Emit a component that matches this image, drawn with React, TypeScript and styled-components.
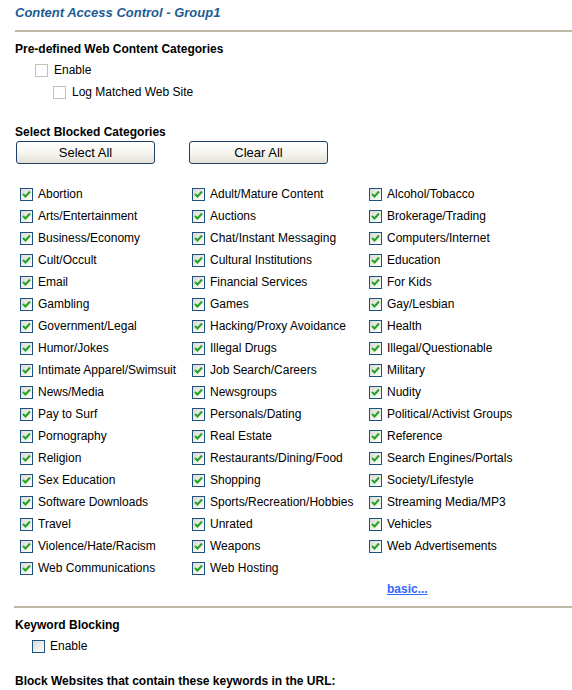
import React from "react";
import styled, { createGlobalStyle } from "styled-components";

const Global = createGlobalStyle`
  html, body { margin: 0; padding: 0; background: #ffffff; }
  body {
    font-family: "Liberation Sans", Arial, sans-serif;
    font-size: 12px;
    color: #000000;
  }
`;

const Page = styled.div`
  width: 572px;
  padding: 5px 0 0 0;
  box-sizing: border-box;
`;

const Title = styled.h1`
  margin: 0 0 0 15px;
  font-size: 13px;
  line-height: 16px;
  font-weight: bold;
  font-style: italic;
  color: #1b5d93;
`;

const Rule = styled.hr<{ $top: number; $left: number }>`
  margin: ${(p) => p.$top}px 0 0 ${(p) => p.$left}px;
  border: 0;
  height: 2px;
  background: #bdb9a6;
`;

const Heading = styled.div<{ $top: number }>`
  margin: ${(p) => p.$top}px 0 0 15px;
  font-weight: bold;
  line-height: 14px;
  height: 14px;
`;

const OptionRow = styled.label<{ $top: number; $indent: number; $gap?: number }>`
  display: flex;
  align-items: center;
  gap: ${(p) => p.$gap ?? 6}px;
  margin: ${(p) => p.$top}px 0 0 ${(p) => p.$indent}px;
  height: 14px;
  line-height: 14px;
`;

const Box = styled.span<{ $disabled?: boolean }>`
  display: inline-flex;
  align-items: center;
  justify-content: center;
  width: 11px;
  height: 11px;
  flex: none;
  border: 1px solid ${(p) => (p.$disabled ? "#c5c2b2" : "#1c5180")};
  background: ${(p) =>
    p.$disabled
      ? "#ffffff"
      : "linear-gradient(135deg, #dcdcd6 0%, #f4f4f0 70%, #ffffff 100%)"};
`;

const ButtonRow = styled.div`
  display: flex;
  gap: 34px;
  margin: 2px 0 0 16px;
`;

const Button = styled.button`
  width: 139px;
  height: 23px;
  padding: 0;
  border: 1px solid #1f3f6b;
  border-radius: 3px;
  background: linear-gradient(180deg, #ffffff 0%, #f5f4ef 55%, #e3e1d6 100%);
  font-family: "Liberation Sans", Arial, sans-serif;
  font-size: 13px;
  color: #000000;
`;

const Grid = styled.div`
  display: grid;
  grid-template-columns: 172px 177px 1fr;
  grid-auto-rows: 22px;
  margin: 19px 0 0 20px;
`;

const Cell = styled.label`
  display: flex;
  align-items: center;
  gap: 5px;
  white-space: nowrap;
`;

const LinkRow = styled.div`
  margin: 3px 0 0 387px;
  height: 14px;
  line-height: 14px;
`;

const MoreLink = styled.a`
  font-weight: bold;
  color: #3366ff;
  text-decoration: underline;
`;

const Check = () => (
  <svg width="9" height="8" viewBox="0 0 9 8">
    <path d="M1 4 L3.5 6.5 L8 1.5" fill="none" stroke="#23a323" strokeWidth="2" />
  </svg>
);

const categories = [
  ["Abortion", "Adult/Mature Content", "Alcohol/Tobacco"],
  ["Arts/Entertainment", "Auctions", "Brokerage/Trading"],
  ["Business/Economy", "Chat/Instant Messaging", "Computers/Internet"],
  ["Cult/Occult", "Cultural Institutions", "Education"],
  ["Email", "Financial Services", "For Kids"],
  ["Gambling", "Games", "Gay/Lesbian"],
  ["Government/Legal", "Hacking/Proxy Avoidance", "Health"],
  ["Humor/Jokes", "Illegal Drugs", "Illegal/Questionable"],
  ["Intimate Apparel/Swimsuit", "Job Search/Careers", "Military"],
  ["News/Media", "Newsgroups", "Nudity"],
  ["Pay to Surf", "Personals/Dating", "Political/Activist Groups"],
  ["Pornography", "Real Estate", "Reference"],
  ["Religion", "Restaurants/Dining/Food", "Search Engines/Portals"],
  ["Sex Education", "Shopping", "Society/Lifestyle"],
  ["Software Downloads", "Sports/Recreation/Hobbies", "Streaming Media/MP3"],
  ["Travel", "Unrated", "Vehicles"],
  ["Violence/Hate/Racism", "Weapons", "Web Advertisements"],
  ["Web Communications", "Web Hosting", ""],
];

export default function App() {
  return (
    <Page>
      <Global />
      <Title>Content Access Control - Group1</Title>
      <Rule $top={9} $left={15} />
      <Heading $top={10}>Pre-defined Web Content Categories</Heading>
      <OptionRow $top={7} $indent={35}>
        <Box $disabled />
        Enable
      </OptionRow>
      <OptionRow $top={8} $indent={53}>
        <Box $disabled />
        Log Matched Web Site
      </OptionRow>
      <Heading $top={26}>Select Blocked Categories</Heading>
      <ButtonRow>
        <Button>Select All</Button>
        <Button>Clear All</Button>
      </ButtonRow>
      <Grid>
        {categories.flat().map((name, i) =>
          name ? (
            <Cell key={i}>
              <Box>
                <Check />
              </Box>
              {name}
            </Cell>
          ) : (
            <span key={i} />
          )
        )}
      </Grid>
      <LinkRow>
        <MoreLink href="#">basic...</MoreLink>
      </LinkRow>
      <Rule $top={10} $left={14} />
      <Heading $top={10}>Keyword Blocking</Heading>
      <OptionRow $top={7} $indent={32} $gap={5}>
        <Box />
        Enable
      </OptionRow>
      <Heading $top={21}>Block Websites that contain these keywords in the URL:</Heading>
    </Page>
  );
}
